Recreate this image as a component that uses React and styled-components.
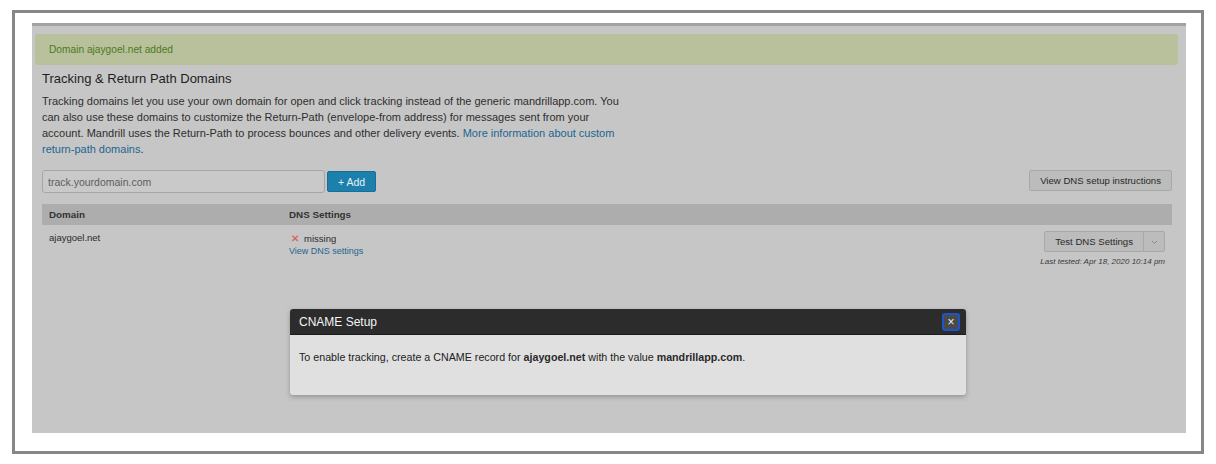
import React from 'react';
import styled, { createGlobalStyle } from 'styled-components';

const GlobalStyle = createGlobalStyle`
  body {
    margin: 0;
    background: #fff;
    font-family: "Liberation Sans", Arial, sans-serif;
    color: #2a2a2a;
  }
`;

const Frame = styled.div`
  box-sizing: border-box;
  margin: 10px 0 0 12px;
  width: 1192px;
  height: 444px;
  border: 3px solid #878787;
  padding: 10px 15px 18px 17px;
  background: #fff;
`;

const Page = styled.div`
  position: relative;
  height: 100%;
  background: #c6c6c6;
  border-top: 3px solid #a2a2a2;
  box-sizing: border-box;
`;

const Alert = styled.div`
  margin: 8px 8px 0 3px;
  height: 31px;
  display: flex;
  align-items: center;
  padding-left: 14px;
  background: #b8c19c;
  border-radius: 3px;
  color: #4b7b1c;
  font-size: 10.2px;
`;

const Content = styled.div`
  padding: 0 14px 0 10px;
`;

const Title = styled.h2`
  margin: 4px 0 0;
  font-size: 13px;
  font-weight: normal;
  line-height: 20px;
  color: #1e1e1e;
`;

const Intro = styled.p`
  margin: 4px 0 0;
  width: 580px;
  font-size: 11px;
  line-height: 16px;
  color: #2e2e2e;
`;

const Link = styled.a`
  color: #1c6590;
  text-decoration: none;
  font-size: ${(p) => (p.small ? '9px' : 'inherit')};
`;

const Toolbar = styled.div`
  margin-top: 11px;
  display: flex;
  align-items: center;
`;

const DomainInput = styled.input`
  box-sizing: border-box;
  width: 283px;
  height: 23px;
  margin-top: 2px;
  padding: 0 5px;
  border: 1px solid #a6a6a6;
  border-radius: 3px;
  background: #c9c9c9;
  font-family: inherit;
  font-size: 10.5px;
  color: #333;
  &::placeholder {
    color: #5e5e5e;
  }
`;

const AddButton = styled.button`
  margin-left: 2px;
  height: 21px;
  width: 49px;
  margin-top: 2px;
  border: 1px solid #1a6e96;
  border-radius: 2px;
  background: #1c80ad;
  color: #e8f0f4;
  font-family: inherit;
  font-size: 10.5px;
  padding: 0;
`;

const GreyButton = styled.button`
  height: 21px;
  padding: 0 ${(p) => (p.narrow ? '0' : '10px')};
  width: ${(p) => (p.narrow ? '22px' : 'auto')};
  border: 1px solid #a8a8a8;
  border-radius: ${(p) => (p.narrow ? '0 2px 2px 0' : '2px')};
  background: #bcbcbc;
  color: #2a2a2a;
  font-family: inherit;
  font-size: 9.6px;
  margin-left: ${(p) => (p.narrow ? '-1px' : '0')};
`;

const Spacer = styled.div`
  flex: 1;
`;

const Table = styled.div`
  margin-top: 11px;
`;

const HeadRow = styled.div`
  display: grid;
  grid-template-columns: 247px 1fr;
  height: 21px;
  align-items: center;
  background: #adadad;
  font-size: 9.8px;
  font-weight: bold;
  color: #333;
`;

const Cell = styled.div`
  padding-left: ${(p) => (p.first ? '7px' : '0')};
`;

const BodyRow = styled.div`
  display: grid;
  grid-template-columns: 247px 1fr auto;
  padding: 7px 7px 0 0;
  font-size: 9.5px;
  color: #2a2a2a;
`;

const Status = styled.div`
  display: flex;
  align-items: center;
  gap: 5px;
  margin-left: 2px;
  line-height: 13px;
`;

const Cross = styled.span`
  color: #d96a66;
  font-weight: bold;
  font-size: 10px;
`;

const Actions = styled.div`
  display: flex;
  flex-direction: column;
  align-items: flex-end;
`;

const SplitButton = styled.div`
  display: flex;
  margin-top: -1px;
`;

const LastTested = styled.div`
  margin-top: 5px;
  font-size: 8px;
  font-style: italic;
  color: #3a3a3a;
`;

const Modal = styled.div`
  position: absolute;
  left: 258px;
  top: 283px;
  width: 676px;
  height: 86px;
  border-radius: 3px;
  overflow: hidden;
  background: #e0e0e0;
  box-shadow: 0 2px 5px rgba(0, 0, 0, 0.25);
`;

const ModalHead = styled.div`
  height: 25px;
  display: flex;
  align-items: center;
  justify-content: space-between;
  padding: 0 6px 0 9px;
  background: #2c2c2c;
  border-bottom: 1px solid #1c1c1c;
  color: #f4f4f4;
  font-size: 12px;
`;

const CloseButton = styled.button`
  box-sizing: border-box;
  width: 18px;
  height: 18px;
  padding: 0;
  border: 2px solid #1d55c8;
  border-radius: 3px;
  background: #4a4a4a;
  color: #eee;
  font-size: 12px;
  line-height: 12px;
  font-family: inherit;
`;

const ModalBody = styled.div`
  padding: 16px 9px;
  font-size: 10.7px;
  color: #222;
  b {
    color: #2a2a2a;
  }
`;

export default function App() {
  return (
    <>
      <GlobalStyle />
      <Frame>
        <Page>
          <Alert>Domain ajaygoel.net added</Alert>
          <Content>
            <Title>Tracking &amp; Return Path Domains</Title>
            <Intro>
              Tracking domains let you use your own domain for open and click tracking instead of the
              generic mandrillapp.com. You can also use these domains to customize the Return-Path
              (envelope-from address) for messages sent from your account. Mandrill uses the
              Return-Path to process bounces and other delivery events.{' '}
              <Link href="#">More information about custom return-path domains</Link>.
            </Intro>
            <Toolbar>
              <DomainInput placeholder="track.yourdomain.com" />
              <AddButton>+ Add</AddButton>
              <Spacer />
              <GreyButton>View DNS setup instructions</GreyButton>
            </Toolbar>
            <Table>
              <HeadRow>
                <Cell first>Domain</Cell>
                <Cell>DNS Settings</Cell>
              </HeadRow>
              <BodyRow>
                <Cell first>ajaygoel.net</Cell>
                <div>
                  <Status>
                    <Cross>✕</Cross> missing
                  </Status>
                  <Link href="#" small>View DNS settings</Link>
                </div>
                <Actions>
                  <SplitButton>
                    <GreyButton>Test DNS Settings</GreyButton>
                    <GreyButton narrow>
                      <svg width="7" height="5" viewBox="0 0 7 5">
                        <path d="M1 1l2.5 2.5L6 1" fill="none" stroke="#8a8a8a" strokeWidth="1" />
                      </svg>
                    </GreyButton>
                  </SplitButton>
                  <LastTested>Last tested: Apr 18, 2020 10:14 pm</LastTested>
                </Actions>
              </BodyRow>
            </Table>
          </Content>
          <Modal>
            <ModalHead>
              CNAME Setup
              <CloseButton>×</CloseButton>
            </ModalHead>
            <ModalBody>
              To enable tracking, create a CNAME record for <b>ajaygoel.net</b> with the value{' '}
              <b>mandrillapp.com</b>.
            </ModalBody>
          </Modal>
        </Page>
      </Frame>
    </>
  );
}
